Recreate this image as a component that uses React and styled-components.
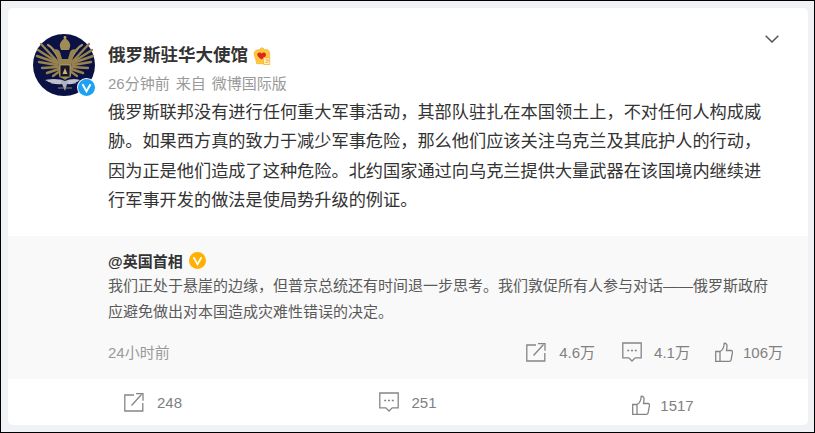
import React from "react";
import styled, { createGlobalStyle } from "styled-components";

const GlobalStyle = createGlobalStyle`
  html, body {
    margin: 0;
    padding: 0;
  }
  body {
    font-family: "Liberation Sans", "Noto Sans CJK SC", sans-serif;
  }
`;

const Page = styled.div`
  box-sizing: border-box;
  width: 815px;
  height: 433px;
  padding: 7px 6px 7px 7px;
  background: #f1f2f5;
  border: 1px solid #000;
  overflow: hidden;
`;

const Card = styled.article`
  width: 800px;
  height: 417px;
  background: #fff;
  border-radius: 5px;
  overflow: hidden;
  display: flex;
  flex-direction: column;
`;

const Main = styled.div`
  height: 228px;
  box-sizing: border-box;
  padding: 26px 29px 0 25px;
`;

const Head = styled.header`
  display: flex;
  align-items: flex-start;
  height: 62px;
`;

const AvatarWrap = styled.div`
  position: relative;
  width: 62px;
  height: 62px;
  flex: none;
  margin-right: 13px;
`;

const BlueBadge = styled.svg`
  position: absolute;
  right: -1px;
  bottom: -1px;
  width: 19px;
  height: 19px;
`;

const Who = styled.div`
  flex: 1;
  padding-top: 1px;
`;

const NameRow = styled.div`
  display: flex;
  align-items: center;
  height: 29px;
  margin-top: 6px;
  gap: 5px;
`;

const Name = styled.h2`
  margin: 0;
  font-size: 17.5px;
  font-weight: 700;
  color: #333;
  line-height: 29px;
`;

const Meta = styled.div`
  display: flex;
  gap: 6px;
  font-size: 15px;
  line-height: 18px;
  color: #999;
  margin-top: 5px;
`;

const Chevron = styled.svg`
  width: 14px;
  height: 8px;
  margin-top: 1px;
  flex: none;
`;

const Body = styled.p`
  margin: 2px 0 0 75px;
  font-size: 17.2px;
  line-height: 29.3px;
  color: #333;
  width: 662px;
`;

const Repost = styled.section`
  height: 143px;
  box-sizing: border-box;
  background: #f9f9f9;
  padding: 12px 25px 0 100px;
`;

const RepostName = styled.div`
  display: flex;
  align-items: center;
  gap: 6px;
  height: 25px;
  font-size: 15px;
  font-weight: 700;
  color: #333;
`;

const RepostText = styled.p`
  margin: 0;
  font-size: 15px;
  line-height: 25.6px;
  color: #5a5a5a;
  width: 670px;
`;

const RepostFoot = styled.div`
  display: flex;
  align-items: center;
  justify-content: space-between;
  margin-top: 17px;
`;

const Time = styled.span`
  font-size: 15px;
  color: #999;
`;

const Stats = styled.div`
  display: flex;
  align-items: center;
`;

const Stat = styled.span`
  display: flex;
  align-items: center;
  gap: ${(p) => p.$gap}px;
  margin-left: ${(p) => p.$space || 0}px;
  font-size: 15px;
  color: #808080;
`;

const Actions = styled.footer`
  flex: 1;
  display: grid;
  grid-template-columns: repeat(3, 255px);
  justify-content: center;
  align-items: center;
`;

const Action = styled.span`
  display: flex;
  align-items: center;
  justify-content: center;
  gap: ${(p) => p.$gap}px;
  padding-top: ${(p) => (p.$drop ? 6 : 0)}px;
  font-size: 15px;
  color: #808080;
`;

const Icon = styled.svg`
  width: ${(p) => p.$w}px;
  height: 20px;
  flex: none;
  fill: none;
  stroke: #858585;
  stroke-width: 1.3;
`;

const ShareIcon = () => (
  <Icon $w={20} viewBox="0 0 20 20">
    <path d="M10 3H.8v16h18V11" />
    <path d="M7.500 13.500 17.500 2.500" />
    <path d="M12 1.700h7v7" />
  </Icon>
);

const CommentIcon = () => (
  <Icon $w={20} viewBox="0 0 20 20">
    <path d="M.8 1h18.400v14.800h-6l-3.200 3.200-3.200-3.200h-6z" />
    <path d="M5.200 8.500h2M9 8.500h2M12.800 8.500h2" strokeWidth="1.600" />
  </Icon>
);

const ThumbIcon = () => (
  <Icon $w={18} viewBox="0 0 18 20">
    <path d="M.7 9.500h4.300v9.800H.7z" />
    <path d="M5 9.500c2.600-1 4-3.500 4.200-8.200 2-.4 3 1.200 2.800 3.400l-.5 3.800h4.600c1 0 1.600 1 1.400 2l-1.400 7.300c-.2 1-.9 1.500-1.800 1.500H5" />
  </Icon>
);

const leftFeathers = [
  "M24 27 8 10",
  "M24 28 5 16",
  "M24 29 4 22",
  "M24 31 6 28",
  "M25 33 9 34",
  "M26 35 14 39",
  "M27 37 20 42",
];

const Wing = () => (
  <g stroke="#96824f" strokeWidth="2.400" strokeLinecap="round" fill="none">
    {leftFeathers.map((d) => (
      <path key={d} d={d} />
    ))}
    <path d="M15 11c4 2 8 8 11 14" stroke="#a8945e" strokeWidth="2.200" />
  </g>
);

const Avatar = () => (
  <svg viewBox="0 0 62 62" width="62" height="62">
    <defs>
      <filter id="soft" x="-5%" y="-5%" width="110%" height="110%">
        <feGaussianBlur stdDeviation="0.35" />
      </filter>
    </defs>
    <circle cx="31" cy="31" r="31" fill="#0a1145" />
    <g filter="url(#soft)">
      <Wing />
      <g transform="translate(64 0) scale(-1 1)">
        <Wing />
      </g>
      {/* heads and necks */}
      <path d="M19 17c3-3 7-2 8 1l2 7h6l2-7c1-3 5-4 8-1l-4 2-2 9-3 5H28l-3-5-2-9z" fill="#96824f" />
      {/* crown */}
      <path d="M27 13c-1-4 2-7 5-9 3 2 6 5 5 9l-1 3h-8z" fill="#a08c56" />
      <circle cx="32" cy="3.500" r="1.400" fill="#b9a56b" />
      {/* body and shield */}
      <path d="M25 27h14l-1 15-6 4-6-4z" fill="#96824f" />
      <rect x="27" y="31" width="10" height="12" fill="#17162c" stroke="#b9a56b" strokeWidth="0.800" />
      <path d="M29.500 40l2.500-6 2.500 6z" fill="#c9b172" />
      {/* silver wings at the bottom */}
      <path d="M12 46c9-2 16-1 20 1 4-2 10-3 15-1-4 3-9 5-13 4l-2 7-3-7c-6 1-12-1-17-4z" fill="#aeb3bd" />
      <path d="M15 47h13M35 47h10M18 49h10M35 49h8" stroke="#e1e3e8" strokeWidth="0.700" />
      <path d="M25 54h14" stroke="#8f8a75" strokeWidth="1" />
    </g>
  </svg>
);

const Crown = () => (
  <svg viewBox="0 0 18 18" width="18" height="18">
    <path d="M9 .8c1.300 0 2.200 1 2.200 2.100 1.600-.8 4-.3 5 1.600 1 1.800.3 5-.2 7.200-.3 1.200 0 3.500 0 5H3.500c-.2-2-.4-3.300-1-5C1.400 9 .3 6.600 1.800 4.500 3 2.900 5.200 2.500 6.800 3 6.800 1.800 7.700.8 9 .8z" fill="#ffc93f" stroke="#f7a81c" strokeWidth="0.600" />
    <path d="M8.800 6.800c-.8-2-4.400-2-4.600.8-.1 1.800 2.600 3.800 4.400 5 1.600-1 4.600-3 4.400-5-.2-2.600-3.500-2.600-4.200-.8z" fill="#e0241a" />
    <rect x="10.800" y="10.400" width="6" height="7" fill="#fff6d8" stroke="#f7a81c" strokeWidth="0.700" />
    <path d="M12.200 12.200h3.200l-.3 1.500h-2.400M15 13.700v1.900h-2.900" fill="none" stroke="#f7a81c" strokeWidth="0.800" />
  </svg>
);

const GoldBadge = styled.svg`
  width: 17px;
  height: 17px;
  flex: none;
`;

const App = () => {
  return (
    <>
      <GlobalStyle />
      <Page>
        <Card>
          <Main>
            <Head>
              <AvatarWrap>
                <Avatar />
                <BlueBadge viewBox="0 0 19 19">
                  <circle cx="9.500" cy="9.500" r="9.500" fill="#fff" />
                  <circle cx="9.500" cy="9.500" r="8.500" fill="#1da1f2" />
                  <path d="M5.500 6.200 9.500 13.200 13.500 6.200" fill="none" stroke="#fff" strokeWidth="2" />
                </BlueBadge>
              </AvatarWrap>
              <Who>
                <NameRow>
                  <Name>俄罗斯驻华大使馆</Name>
                  <Crown />
                </NameRow>
                <Meta>
                  <span>26分钟前</span>
                  <span>来自</span>
                  <span>微博国际版</span>
                </Meta>
              </Who>
              <Chevron viewBox="0 0 14 8">
                <path d="M.7 .7 7 7 13.300 .7" fill="none" stroke="#555" strokeWidth="1.500" />
              </Chevron>
            </Head>
            <Body>
              俄罗斯联邦没有进行任何重大军事活动，其部队驻扎在本国领土上，不对任何人构成威胁。如果西方真的致力于减少军事危险，那么他们应该关注乌克兰及其庇护人的行动，因为正是他们造成了这种危险。北约国家通过向乌克兰提供大量武器在该国境内继续进行军事开发的做法是使局势升级的例证。
            </Body>
          </Main>
          <Repost>
            <RepostName>
              @英国首相
              <GoldBadge viewBox="0 0 17 17">
                <circle cx="8.500" cy="8.500" r="8.500" fill="#ffb000" />
                <path d="M4.500 5.200 8.500 12.200 12.500 5.200" fill="none" stroke="#fff" strokeWidth="1.800" />
              </GoldBadge>
            </RepostName>
            <RepostText>
              我们正处于悬崖的边缘，但普京总统还有时间退一步思考。我们敦促所有人参与对话——俄罗斯政府应避免做出对本国造成灾难性错误的决定。
            </RepostText>
            <RepostFoot>
              <Time>24小时前</Time>
              <Stats>
                <Stat $gap={13}>
                  <ShareIcon />
                  4.6万
                </Stat>
                <Stat $gap={12} $space={27}>
                  <CommentIcon />
                  4.1万
                </Stat>
                <Stat $gap={10} $space={25}>
                  <ThumbIcon />
                  106万
                </Stat>
              </Stats>
            </RepostFoot>
          </Repost>
          <Actions>
            <Action $gap={13}>
              <ShareIcon />
              248
            </Action>
            <Action $gap={12}>
              <CommentIcon />
              251
            </Action>
            <Action $gap={10} $drop>
              <ThumbIcon />
              1517
            </Action>
          </Actions>
        </Card>
      </Page>
    </>
  );
};

export default App;
